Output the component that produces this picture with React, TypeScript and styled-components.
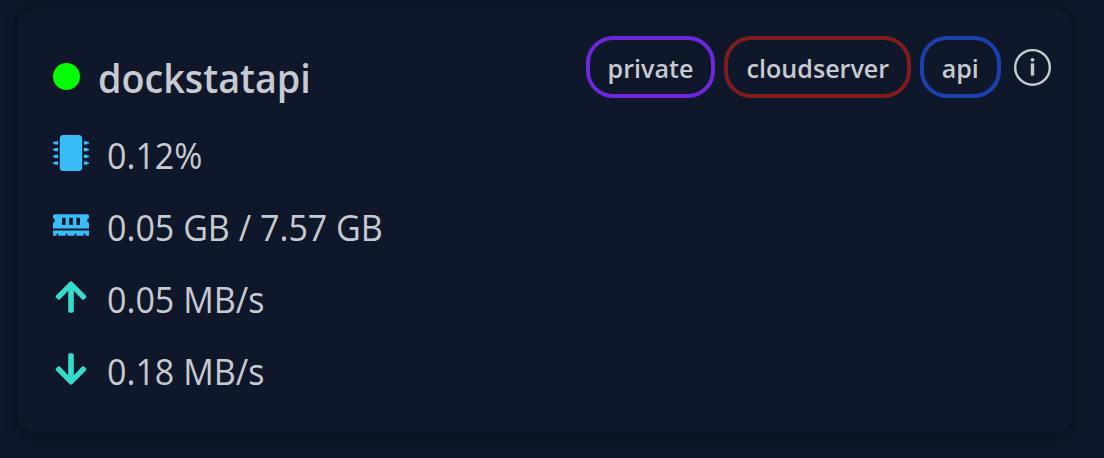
import React from "react";
import styled, { createGlobalStyle } from "styled-components";
import { FaMicrochip, FaMemory, FaArrowUp, FaArrowDown } from "react-icons/fa";

const GlobalStyle = createGlobalStyle`
  * { box-sizing: border-box; }
  body {
    margin: 0;
    background: #0f172a;
    color: #c7cad0;
    font-family: "Segoe UI", "Open Sans", "Noto Sans", sans-serif;
  }
`;

const Page = styled.main`
  height: 458px;
  padding: 7px 29px 0 15px;
  overflow: hidden;
`;

const Card = styled.section`
  height: 427px;
  padding: 27px 21px 0 36px;
  border: 2px solid #0b1120;
  border-radius: 18px;
  box-shadow: 0 4px 12px rgba(5, 8, 25, 0.25);
`;

const Header = styled.header`
  display: flex;
  justify-content: space-between;
  align-items: flex-start;
`;

const Title = styled.h2`
  display: flex;
  align-items: center;
  gap: 18px;
  height: 54px;
  margin: 15px 0 0;
  font-size: 39.5px;
  line-height: 54px;
  font-weight: 650;
`;

const Name = styled.span`
  transform: scaleX(0.955);
  transform-origin: left;
`;

const StatusDot = styled.span`
  width: 27px;
  height: 27px;
  margin-top: -4px;
  border-radius: 50%;
  background: #00ff00;
`;

const Tags = styled.div`
  display: flex;
  align-items: center;
  gap: 9px;
`;

const Tag = styled.span<{ $color: string; $width: number }>`
  display: flex;
  justify-content: center;
  width: ${(p) => p.$width}px;
  height: 62px;
  border: 4px solid ${(p) => p.$color};
  border-radius: 27px;
  font-size: 26px;
  font-weight: 650;
  line-height: 56px;
`;

const TagLabel = styled.span`
  transform: scaleX(0.965);
`;

const InfoIcon = styled.svg`
  width: 38px;
  height: 38px;
  margin-left: 4px;
`;

const Stats = styled.ul`
  margin: 14px 0 0;
  padding: 0;
  list-style: none;
`;

const Stat = styled.li<{ $tone: string }>`
  display: flex;
  align-items: center;
  gap: 18px;
  height: 72px;

  svg {
    width: 36px;
    height: 36px;
    margin-top: -5px;
    color: ${(p) => p.$tone};
  }
`;

const Value = styled.span`
  margin-top: 2px;
  font-size: 36px;
  line-height: 54px;
  white-space: nowrap;
  transform: scaleX(0.945);
  transform-origin: left;
`;

const tags = [
  { label: "private", color: "#6d28d9", width: 129 },
  { label: "cloudserver", color: "#7f1d1d", width: 187 },
  { label: "api", color: "#1e40af", width: 81 },
];

const stats = [
  { icon: FaMicrochip, tone: "#38bdf8", value: "0.12%" },
  { icon: FaMemory, tone: "#38bdf8", value: "0.05 GB / 7.57 GB" },
  { icon: FaArrowUp, tone: "#35dccb", value: "0.05 MB/s" },
  { icon: FaArrowDown, tone: "#35dccb", value: "0.18 MB/s" },
];

export default function App() {
  return (
    <Page>
      <GlobalStyle />
      <Card>
        <Header>
          <Title>
            <StatusDot />
            <Name>dockstatapi</Name>
          </Title>
          <Tags>
            {tags.map((t) => (
              <Tag key={t.label} $color={t.color} $width={t.width}>
                <TagLabel>{t.label}</TagLabel>
              </Tag>
            ))}
            <InfoIcon viewBox="0 0 38 38" fill="none">
              <circle cx="18.5" cy="19.4" r="17.3" stroke="#c7cad0" strokeWidth="2.4" />
              <circle cx="18.5" cy="11.8" r="1.9" fill="#c7cad0" />
              <path d="M16.8 15.4H20.2V27.6H16.8Z" fill="#c7cad0" />
            </InfoIcon>
          </Tags>
        </Header>
        <Stats>
          {stats.map(({ icon: Icon, tone, value }) => (
            <Stat key={value} $tone={tone}>
              <Icon />
              <Value>{value}</Value>
            </Stat>
          ))}
        </Stats>
      </Card>
    </Page>
  );
}
